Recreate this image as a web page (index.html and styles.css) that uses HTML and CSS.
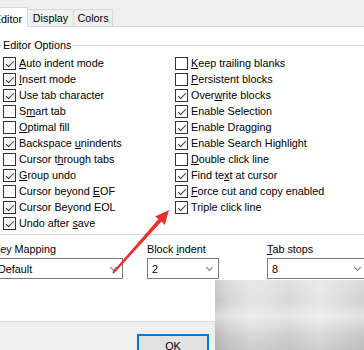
FILE: index.html
```html
<!DOCTYPE html>
<html lang="en">
<head>
    <meta charset="UTF-8">
    <meta name="viewport" content="width=device-width, initial-scale=1.0">
    <title>Editor Options</title>
    <link rel="stylesheet" href="styles.css">
</head>
<body>
    <div class="dialog">
        <div class="tabs">
            <div class="tab active">Editor</div>
            <div class="tab display-tab">Display</div>
            <div class="tab colors-tab">Colors</div>
        </div>

        <div class="page">
            <div class="group">
                <div class="group-title">Editor Options</div>
                <div class="options">
                    <div class="opt"><span class="cb checked"></span><span><u>A</u>uto indent mode</span></div>
                    <div class="opt"><span class="cb checked"></span><span><u>I</u>nsert mode</span></div>
                    <div class="opt"><span class="cb checked"></span><span>Use tab character</span></div>
                    <div class="opt"><span class="cb"></span><span>S<u>m</u>art tab</span></div>
                    <div class="opt"><span class="cb"></span><span><u>O</u>ptimal fill</span></div>
                    <div class="opt"><span class="cb checked"></span><span>Backspace <u>u</u>nindents</span></div>
                    <div class="opt"><span class="cb"></span><span>Cursor t<u>h</u>rough tabs</span></div>
                    <div class="opt"><span class="cb checked"></span><span><u>G</u>roup undo</span></div>
                    <div class="opt"><span class="cb"></span><span>Cursor beyond <u>E</u>OF</span></div>
                    <div class="opt"><span class="cb checked"></span><span>Cursor Beyond EOL</span></div>
                    <div class="opt"><span class="cb checked"></span><span>Undo after <u>s</u>ave</span></div>

                    <div class="opt"><span class="cb"></span><span><u>K</u>eep trailing blanks</span></div>
                    <div class="opt"><span class="cb"></span><span><u>P</u>ersistent blocks</span></div>
                    <div class="opt"><span class="cb checked"></span><span>Over<u>w</u>rite blocks</span></div>
                    <div class="opt"><span class="cb checked"></span><span>Enable Selection</span></div>
                    <div class="opt"><span class="cb checked"></span><span>Enable Dragging</span></div>
                    <div class="opt"><span class="cb checked"></span><span>Enable Search Highlight</span></div>
                    <div class="opt"><span class="cb"></span><span><u>D</u>ouble click line</span></div>
                    <div class="opt"><span class="cb checked"></span><span>Find te<u>x</u>t at cursor</span></div>
                    <div class="opt"><span class="cb checked"></span><span><u>F</u>orce cut and copy enabled</span></div>
                    <div class="opt"><span class="cb checked"></span><span>Triple click line</span></div>
                </div>
            </div>

            <div class="fields">
                <div class="field key-field">
                    <div class="field-label"><u>K</u>ey Mapping</div>
                    <div class="combo"><span>Default</span><span class="chevron"></span></div>
                </div>
                <div class="field indent-field">
                    <div class="field-label">Block <u>i</u>ndent</div>
                    <div class="combo"><span>2</span><span class="chevron"></span></div>
                </div>
                <div class="field tabs-field">
                    <div class="field-label"><u>T</u>ab stops</div>
                    <div class="combo"><span>8</span><span class="chevron"></span></div>
                </div>
            </div>
        </div>

        <div class="footer">
            <button class="btn default">OK</button>
        </div>
    </div>

    <div class="smudge"></div>

    <svg class="annotation" width="364" height="350" viewBox="0 0 364 350">
        <polygon points="112.3,272.3 158.5,219 155.2,216.4 169,210 164.8,225.1 161.5,221.6 113.7,273.7" fill="#e8312f"/>
    </svg>
</body>
</html>
```

FILE: styles.css
```css
* {
    margin: 0;
    padding: 0;
    box-sizing: border-box;
}

body {
    position: relative;
    height: 350px;
    overflow: hidden;
    background-color: #f0f0f0;
    font-family: "Liberation Sans", Arial, sans-serif;
    font-size: 10.8px;
    color: #000;
}

u {
    text-decoration: underline;
    text-underline-offset: 1px;
}

.dialog {
    width: 392px;
    margin-left: -12px;
    padding-top: 7px;
}

/* tab strip */
.tabs {
    display: flex;
    align-items: flex-end;
    height: 19px;
}

.tab {
    height: 17px;
    line-height: 16px;
    text-align: center;
    background-color: #f0f0f0;
    border: 1px solid #d9d9d9;
    border-bottom: none;
    margin-left: -1px;
}

.tab.active {
    position: relative;
    z-index: 1;
    width: 40px;
    height: 20px;
    margin-bottom: -1px;
    margin-left: 0;
    line-height: 22px;
    background-color: #fff;
}

.display-tab {
    width: 47px;
}

.colors-tab {
    width: 40px;
}

/* tab page */
.page {
    background-color: #fff;
    border-top: 1px solid #d9d9d9;
    border-bottom: 1px solid #d9d9d9;
    padding: 18px 0 42px 7px;
}

.group {
    border: 1px solid #dcdcdc;
    border-right: none;
    padding: 0 0 3px 7px;
}

.group-title {
    width: max-content;
    margin: -7px 0 0 -1px;
    padding: 0 1px;
    line-height: 13px;
    background-color: #fff;
}

.options {
    display: grid;
    grid-template-columns: 172px auto;
    grid-template-rows: repeat(11, 16px);
    grid-auto-flow: column;
    margin-top: 3px;
}

.opt {
    display: flex;
    align-items: center;
    gap: 3px;
    white-space: nowrap;
}

.cb {
    position: relative;
    width: 13px;
    height: 13px;
    border: 1px solid #333;
    background-color: #fff;
    flex-shrink: 0;
}

.cb.checked::after {
    content: "";
    position: absolute;
    left: 4px;
    top: 1px;
    width: 3px;
    height: 7px;
    border-right: 1px solid #333;
    border-bottom: 1px solid #333;
    transform: rotate(45deg);
}

/* combo boxes */
.fields {
    display: flex;
    margin: 8px 0 0 -2px;
}

.field-label {
    line-height: 13px;
    margin-bottom: 2px;
    white-space: nowrap;
}

.key-field {
    width: 130px;
    margin-right: 24px;
}

.indent-field {
    width: 72px;
    margin-right: 48px;
}

.tabs-field {
    width: 100px;
}

.combo {
    display: flex;
    align-items: center;
    justify-content: space-between;
    height: 21px;
    padding: 0 6px 0 4px;
    border: 1px solid #7a7a7a;
    background-color: #fff;
}

.chevron {
    width: 5px;
    height: 5px;
    margin-top: -3px;
    border-right: 1px solid #777;
    border-bottom: 1px solid #777;
    transform: rotate(45deg);
}

/* bottom buttons */
.footer {
    padding: 12px 0 0 149px;
}

.btn {
    width: 72px;
    height: 23px;
    font-family: inherit;
    font-size: 10.8px;
    color: #000;
    background-color: #e1e1e1;
    border: 1px solid #0078d7;
    box-shadow: inset 0 0 0 1px #0078d7;
}

/* blurred watermark over the corner */
.smudge {
    position: absolute;
    left: 215px;
    top: 280px;
    width: 149px;
    height: 70px;
    background-image:
        linear-gradient(180deg, rgba(255, 255, 255, 0.2) 0, rgba(255, 255, 255, 0) 30%, rgba(255, 255, 255, 0.35) 52%, rgba(0, 0, 0, 0.04) 75%, rgba(0, 0, 0, 0.1) 100%),
        linear-gradient(90deg, #c2c2c2 0, #d4d4d4 8%, #e4e4e4 25%, #d9d9d9 50%, #e6e6e6 70%, #d2d2d2 100%);
}

.annotation {
    position: absolute;
    left: 0;
    top: 0;
    pointer-events: none;
}
```
